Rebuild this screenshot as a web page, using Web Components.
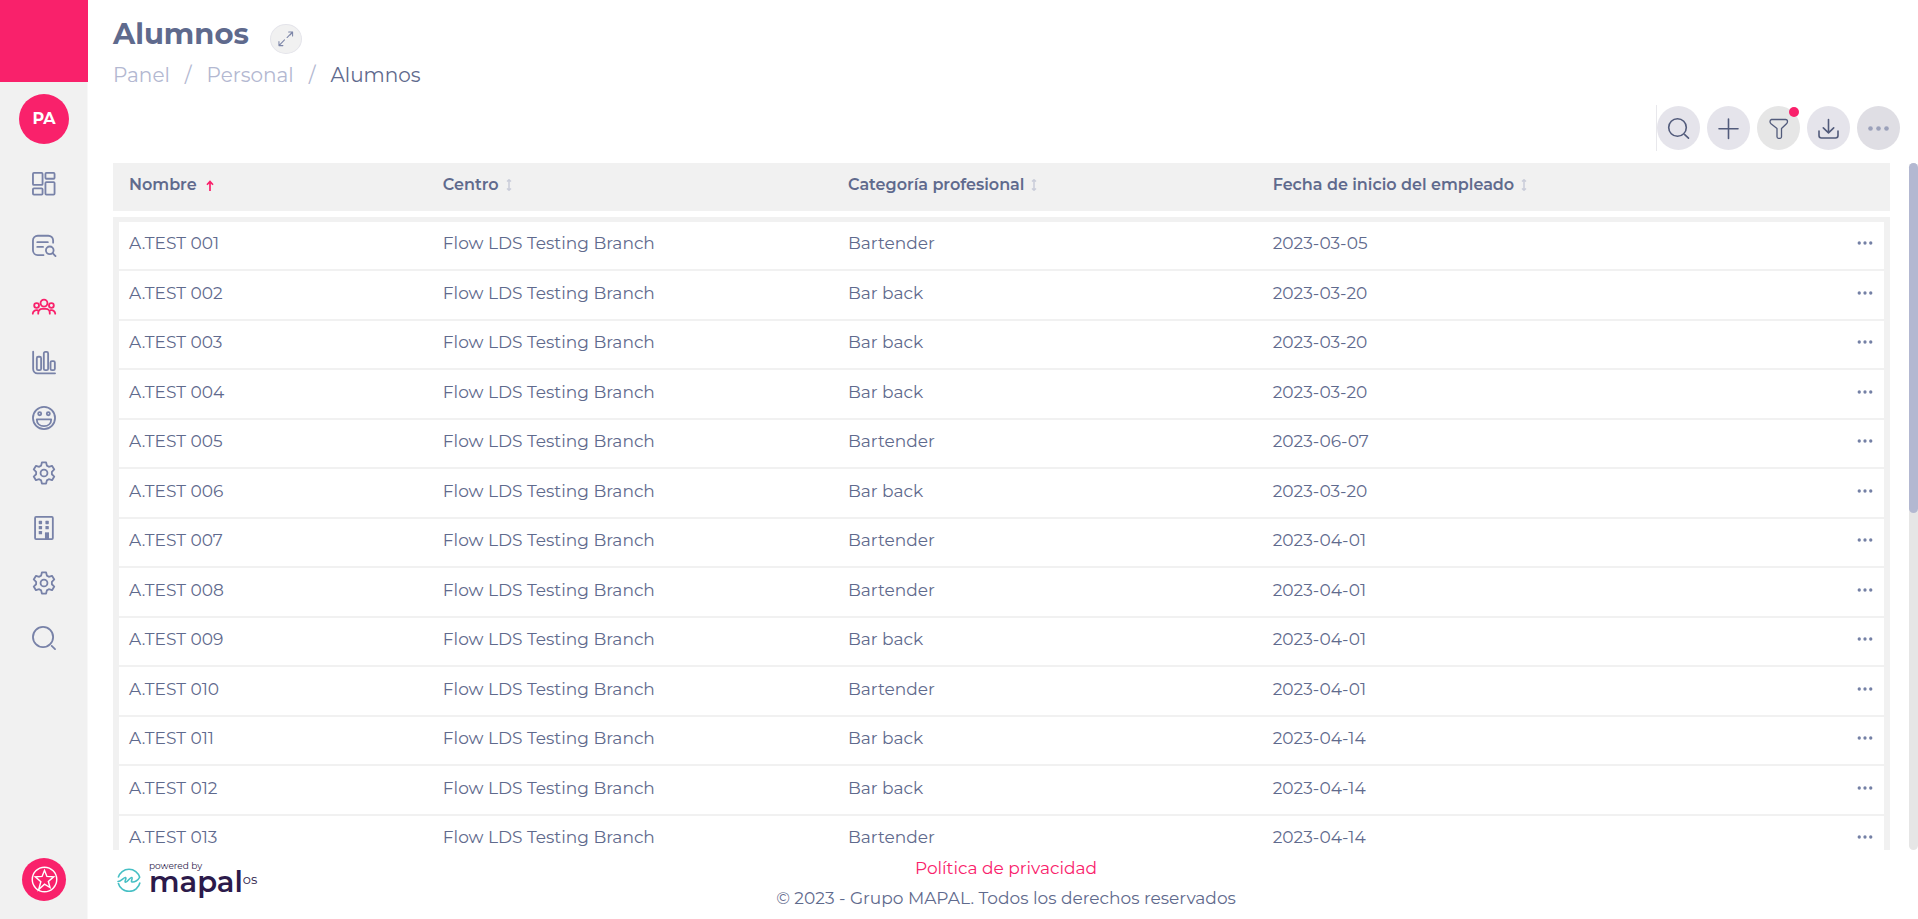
<!DOCTYPE html>
<html lang="es">
<head>
<meta charset="utf-8">
<meta name="viewport" content="width=device-width, initial-scale=1">
<title>Alumnos</title>
<style>
  html, body { height: 100%; margin: 0; }
  body {
    font-family: Montserrat, Inter, "Open Sans", sans-serif;
    font-size: 17px;
    line-height: 24px;
    color: var(--ink);
    background: #fff;
    overflow: hidden;
    --ink: #5f6a8d;
    --muted: #b3b8d1;
    --brand: #f9216b;
    --surface: #f1f1f1;
  }
</style>
</head>
<body>
<app-shell>
  <side-nav slot="nav"></side-nav>
  <page-header slot="header"></page-header>
  <tool-bar slot="tools"></tool-bar>
  <student-table slot="content"></student-table>
  <page-footer slot="footer"></page-footer>
</app-shell>

<script>
const icons = {
  dashboard: '<rect x="1" y="1" width="10" height="12.5" rx="1"/><rect x="14" y="1" width="9.500" height="6" rx="1"/><rect x="1" y="17" width="10" height="6.500" rx="1"/><rect x="14" y="10.500" width="9.500" height="13" rx="1"/>',
  report: '<path d="M22 9V6.500A5 5 0 0 0 17 1.800H6A5 5 0 0 0 1 6.800V17a5 5 0 0 0 5 5h6M5.500 8.500h11M5.500 13.500h6"/><circle cx="18.500" cy="17" r="4"/><path d="M21.500 20l3 3"/>',
  people: '<circle cx="12.500" cy="9.500" r="3.600"/><circle cx="4.800" cy="12" r="2.500"/><circle cx="20.200" cy="12" r="2.500"/><path d="M6.500 20.500v-1a4 4 0 0 1 4-4h4a4 4 0 0 1 4 4v1M.8 20.500a3.800 3.800 0 0 1 4.600-3.600M24.200 20.500a3.800 3.800 0 0 0-4.600-3.600"/>',
  chart: '<path d="M1.200.8v18a4.500 4.500 0 0 0 4.500 4.500H24"/><rect x="5" y="6" width="4.500" height="14" rx="1.500"/><rect x="12.300" y="1" width="4.500" height="19" rx="1.500"/><rect x="19.300" y="10.500" width="4.500" height="9.500" rx="1.500"/>',
  smile: '<circle cx="12.500" cy="12.500" r="11.500"/><circle cx="8" cy="8" r="1.600"/><circle cx="17" cy="8" r="1.600"/><path d="M5 14h15c0 4.500-3.300 7-7.500 7S5 18.500 5 14z"/>',
  gear: '<circle cx="12.500" cy="12.500" r="3.600"/><path d="M10.300 1.500h4.400l.8 3.300 2 1.200 3.300-1 2.400 3.800-2.500 2.500v2.500l2.500 2.400-2.300 3.800-3.400-1-2 1.200-.8 3.300h-4.400l-.8-3.300-2-1.200-3.400 1-2.300-3.800 2.500-2.400v-2.500L1.800 8.800 4.200 5l3.300 1 2-1.200z"/>',
  building: '<rect x="3.200" y="1" width="18.500" height="23" rx="1"/><g fill="currentColor" stroke="none"><rect x="7" y="5" width="3.500" height="3.500" rx=".6"/><rect x="14" y="5" width="3.500" height="3.500" rx=".6"/><rect x="7" y="10.300" width="3.500" height="3.500" rx=".6"/><rect x="14" y="10.300" width="3.500" height="3.500" rx=".6"/><rect x="7" y="15.600" width="3.500" height="3.500" rx=".6"/><path d="M13.500 17h4.200v7h-4.200z"/></g>',
  search: '<circle cx="11.500" cy="11.500" r="10.500"/><path d="M20.500 20.700l3.500 3.300"/>',
  find: '<circle cx="11.500" cy="11.500" r="8.800"/><path d="M18.700 18.700l3.800 3.500"/>',
  plus: '<path d="M12.500 3v19.500M3 12.800h19"/>',
  filter: '<path d="M5.500 3.500h14a2 2 0 0 1 2 2c0 1-.4 1.600-1 2.200l-5 4.800v8.300a1.500 1.500 0 0 1-1.500 1.500h-1.500a1.500 1.500 0 0 1-1.500-1.500v-8.300L5 7.700c-.8-.7-1-1.300-1-2.200a2 2 0 0 1 1.500-2z"/>',
  download: '<path d="M12.500 3.500v13M7.300 11.800l5.200 5 5.200-5M3 15v4.500A2.500 2.500 0 0 0 5.500 22h14a2.500 2.500 0 0 0 2.500-2.500V15"/>',
  expand: '<path d="M17 8l3-3M15.500 4.500H20v4.500M20 4.500l-6.300 6.300M10.800 13.500l-6.300 6.500M4.500 15.500V20H9"/>',
  more: '<g fill="currentColor" stroke="none"><circle cx="4.500" cy="12.500" r="2.300"/><circle cx="12.500" cy="12.500" r="2.300"/><circle cx="20.500" cy="12.500" r="2.300"/></g>',
  star: '<circle cx="14" cy="14" r="12.700"/><path d="M8 24.300l2.200-8L4.500 11.300l7-.5L14 4.500l2.500 6.300 7 .5-5.500 4.700 1.700 6.300-5.700-3.500z" stroke-linejoin="miter"/>'
};

const define = (name, html, setup) => {
  const template = document.createElement('template');
  template.innerHTML = html;
  customElements.define(name, class extends HTMLElement {
    constructor() {
      super();
      this.attachShadow({ mode: 'open' }).append(template.content.cloneNode(true));
    }
    connectedCallback() { if (setup) setup(this); }
  });
};

define('line-icon', `
  <style>
    :host { display: inline-flex; width: 24px; height: 24px; flex: none; }
    svg { width: 100%; height: 100%; fill: none; stroke: currentColor; stroke-linecap: round; stroke-linejoin: round; overflow: visible; }
  </style>
  <svg aria-hidden="true"></svg>`, el => {
  const svg = el.shadowRoot.querySelector('svg');
  svg.setAttribute('viewBox', el.getAttribute('box') || '0 0 25 25');
  svg.setAttribute('stroke-width', el.getAttribute('weight') || '1.9');
  svg.innerHTML = icons[el.getAttribute('name')];
});

define('app-shell', `
  <style>
    :host { display: grid; grid-template-columns: 88px minmax(0, 1fr); height: 100vh; }
    main { display: flex; flex-direction: column; min-width: 0; min-height: 0; padding-left: 25px; }
    .content { flex: 1; min-height: 0; display: flex; }
    .content ::slotted(*) { flex: 1; min-width: 0; }
  </style>
  <slot name="nav"></slot>
  <main>
    <slot name="header"></slot>
    <slot name="tools"></slot>
    <div class="content"><slot name="content"></slot></div>
    <slot name="footer"></slot>
  </main>`);

define('side-nav', `
  <style>
    :host { display: flex; flex-direction: column; align-items: center; background: var(--surface); box-shadow: inset -1px 0 #f8f8f8; }
    .brand { align-self: stretch; height: 82px; background: var(--brand); }
    .avatar { width: 50px; height: 50px; margin: 12px 0 9px; padding: 0; border: 0; border-radius: 50%; background: var(--brand); color: #fff; font: 700 16px/50px Montserrat, Inter, sans-serif; }
    nav { display: flex; flex-direction: column; }
    a { display: flex; align-items: center; justify-content: center; width: 60px; height: 55px; color: #7882a8; }
    a.tall { height: 62px; }
    a.current { height: 58px; color: var(--brand); }
    .help { display: grid; place-items: center; width: 44px; height: 43px; margin: auto 0 18px; padding: 0; border: 0; border-radius: 50%; background: var(--brand); color: #fff; }
    .help line-icon { width: 27px; height: 27px; }
  </style>
  <div class="brand"></div>
  <button class="avatar">PA</button>
  <nav>
    <a class="tall" href="#" aria-label="Panel"><line-icon name="dashboard"></line-icon></a>
    <a class="tall" href="#" aria-label="Informes"><line-icon name="report"></line-icon></a>
    <a class="current" href="#" aria-label="Personal"><line-icon name="people"></line-icon></a>
    <a href="#" aria-label="Gráficos"><line-icon name="chart"></line-icon></a>
    <a href="#" aria-label="Encuestas"><line-icon name="smile"></line-icon></a>
    <a href="#" aria-label="Ajustes"><line-icon name="gear"></line-icon></a>
    <a href="#" aria-label="Centros"><line-icon name="building"></line-icon></a>
    <a href="#" aria-label="Configuración"><line-icon name="gear"></line-icon></a>
    <a href="#" aria-label="Buscar"><line-icon name="search"></line-icon></a>
  </nav>
  <button class="help" aria-label="Ayuda"><line-icon name="star" box="0 0 28 28" weight="1.5"></line-icon></button>`);

define('page-header', `
  <style>
    :host { display: block; padding-top: 14px; }
    .title { display: flex; align-items: flex-start; gap: 21px; height: 46px; }
    h1 { margin: 0; font-size: 29px; line-height: 40px; font-weight: 700; }
    button { display: grid; place-items: center; width: 32px; height: 30px; margin-top: 10px; padding: 0; border: 1px solid #e4e4ea; border-radius: 50%; background: var(--surface); color: #7d86a8; }
    button line-icon { width: 22px; height: 22px; }
    ol { display: flex; gap: 15px; margin: 0; padding: 0; list-style: none; font-size: 20px; line-height: 30px; color: var(--muted); }
    li { display: flex; gap: 15px; }
    li + li::before { content: "/"; }
    a { color: inherit; text-decoration: none; }
    [aria-current] { color: var(--ink); }
  </style>
  <div class="title">
    <h1>Alumnos</h1>
    <button aria-label="Expandir"><line-icon name="expand" weight="1.2"></line-icon></button>
  </div>
  <nav aria-label="Ruta">
    <ol>
      <li><a href="#">Panel</a></li>
      <li><a href="#">Personal</a></li>
      <li><span aria-current="page">Alumnos</span></li>
    </ol>
  </nav>`);

define('tool-bar', `
  <style>
    :host { display: flex; justify-content: flex-end; margin: 15px 18px 12px 0; }
    div { display: flex; align-items: center; gap: 7px; height: 46px; border-left: 1px solid #e8e8ec; }
    button { position: relative; display: grid; place-items: center; width: 43px; height: 44px; padding: 0; border: 0; border-radius: 50%; background: #e5e4eb; color: #525b7b; }
    .filter { background: #e6e6e6; }
    .more { background: #dfdee4; color: #9ba1ba; }
    line-icon { width: 25px; height: 25px; }
    i { position: absolute; top: 1px; right: 1px; width: 10px; height: 10px; border-radius: 50%; background: var(--brand); }
  </style>
  <div role="toolbar" aria-label="Acciones">
    <button aria-label="Buscar"><line-icon name="find" weight="1.6"></line-icon></button>
    <button aria-label="Añadir"><line-icon name="plus" weight="1.6"></line-icon></button>
    <button class="filter" aria-label="Filtrar"><line-icon name="filter" weight="1.3"></line-icon><i></i></button>
    <button aria-label="Descargar"><line-icon name="download" weight="1.6"></line-icon></button>
    <button class="more" aria-label="Más"><line-icon name="more"></line-icon></button>
  </div>`);

const rows = [
  ['A.TEST 001', 'Bartender', '2023-03-05'], ['A.TEST 002', 'Bar back', '2023-03-20'],
  ['A.TEST 003', 'Bar back', '2023-03-20'], ['A.TEST 004', 'Bar back', '2023-03-20'],
  ['A.TEST 005', 'Bartender', '2023-06-07'], ['A.TEST 006', 'Bar back', '2023-03-20'],
  ['A.TEST 007', 'Bartender', '2023-04-01'], ['A.TEST 008', 'Bartender', '2023-04-01'],
  ['A.TEST 009', 'Bar back', '2023-04-01'], ['A.TEST 010', 'Bartender', '2023-04-01'],
  ['A.TEST 011', 'Bar back', '2023-04-14'], ['A.TEST 012', 'Bar back', '2023-04-14'],
  ['A.TEST 013', 'Bartender', '2023-04-14']
];
const sortMark = '<svg width="6" height="12" viewBox="0 0 6 12" aria-hidden="true"><path d="M3 1v10M1 2.500L3 .8l2 1.700M1 9.500l2 1.700 2-1.700" fill="none" stroke="#c9ccd9" stroke-width="1.500"/></svg>';

define('student-table', `
  <style>
    :host { display: flex; min-height: 0; }
    .viewport { flex: 1; min-width: 0; overflow: hidden; margin-right: 19px; }
    table { width: 100%; table-layout: fixed; border-spacing: 0; }
    .c1 { width: 18%; } .c2 { width: 22.8%; } .c3 { width: 23.9%; } .c5 { width: 60px; }
    th, td { box-sizing: border-box; padding: 0 10px 5px; text-align: left; white-space: nowrap; }
    th { height: 54px; border-bottom: 6px solid #fff; background: var(--surface); background-clip: padding-box; font-size: 16px; font-weight: 600; }
    th:first-child { padding-left: 16px; }
    th button { display: inline-flex; align-items: center; gap: 7px; padding: 0; border: 0; background: none; color: inherit; font: inherit; }
    th:first-child button { gap: 9px; }
    th svg { margin-top: 1px; }
    td { height: 50px; border-bottom: 2px solid var(--surface); }
    tr:nth-child(odd) td { height: 49px; }
    tbody tr:first-child td { height: 54px; border-top: 5px solid var(--surface); }
    td:first-child { border-left: 6px solid var(--surface); }
    td:last-child { padding-bottom: 8px; border-right: 6px solid var(--surface); text-align: right; }
    td button { display: inline-grid; place-items: center; width: 18px; height: 20px; padding: 0; border: 0; background: none; color: #7480a5; vertical-align: middle; }
    td line-icon { width: 18px; height: 18px; }
    .track { width: 9px; border-radius: 5px; background: #e6e6e6; }
    .thumb { height: 51%; border-radius: 5px; background: var(--muted); }
  </style>
  <div class="viewport">
    <table>
      <colgroup><col class="c1"><col class="c2"><col class="c3"><col><col class="c5"></colgroup>
      <thead><tr>
        <th scope="col" aria-sort="ascending"><button>Nombre <svg width="8" height="11" viewBox="0 0 8 11" aria-hidden="true"><path d="M4 11V2M1 4.800L4 1.500 7 4.800" fill="none" stroke="#f9216b" stroke-width="1.700"/></svg></button></th>
        <th scope="col"><button>Centro ${sortMark}</button></th>
        <th scope="col"><button>Categoría profesional ${sortMark}</button></th>
        <th scope="col"><button>Fecha de inicio del empleado ${sortMark}</button></th>
        <th></th>
      </tr></thead>
      <tbody>${rows.map(r => `<tr><td>${r[0]}</td><td>Flow LDS Testing Branch</td><td>${r[1]}</td><td>${r[2]}</td><td><button aria-label="Acciones"><line-icon name="more"></line-icon></button></td></tr>`).join('')}</tbody>
    </table>
  </div>
  <div class="track"><div class="thumb"></div></div>`);

define('brand-logo', `
  <style>
    :host { display: grid; grid-template-columns: 24px auto; column-gap: 8px; justify-content: start; color: #2c1a4a; }
    svg { grid-row: 1 / 3; margin-top: 8px; }
    small { font-size: 9px; line-height: 12px; }
    .name { display: flex; align-items: flex-start; }
    b { font: 600 29px/20px Montserrat, Inter, sans-serif; }
    span { font-size: 13px; line-height: 14px; }
  </style>
  <svg width="24" height="24" viewBox="0 0 24 24" fill="none" stroke="#45bfc4" stroke-width="1.600" aria-hidden="true">
    <path d="M1.200 9.500A11.200 11.200 0 0 1 22.800 9.500M23 14.500A11.200 11.200 0 0 1 1.200 15"/>
    <path d="M1 13.500C4 13.500 7 9 8.500 9.500c1.500.5-1.500 4.500 0 4.800 2 .3 4.500-5.500 6.300-4.800 1.500.6-1.500 4.200.2 4.500 2.500.4 6-1.500 7.500-4.500" stroke-linecap="round"/>
  </svg>
  <small>powered by</small>
  <div class="name"><b>mapal</b><span>os</span></div>`);

define('page-footer', `
  <style>
    :host { display: grid; grid-template-columns: 1fr auto 1fr; height: 69px; margin-right: 19px; box-sizing: border-box; padding-top: 3px; }
    brand-logo { align-self: start; padding: 7px 0 0 4px; }
    .legal { display: flex; flex-direction: column; align-items: center; line-height: 30px; }
    a { color: var(--brand); text-decoration: none; }
  </style>
  <brand-logo></brand-logo>
  <div class="legal"><a href="#">Política de privacidad</a><span>© 2023 - Grupo MAPAL. Todos los derechos reservados</span></div>`);
</script>
</body>
</html>
